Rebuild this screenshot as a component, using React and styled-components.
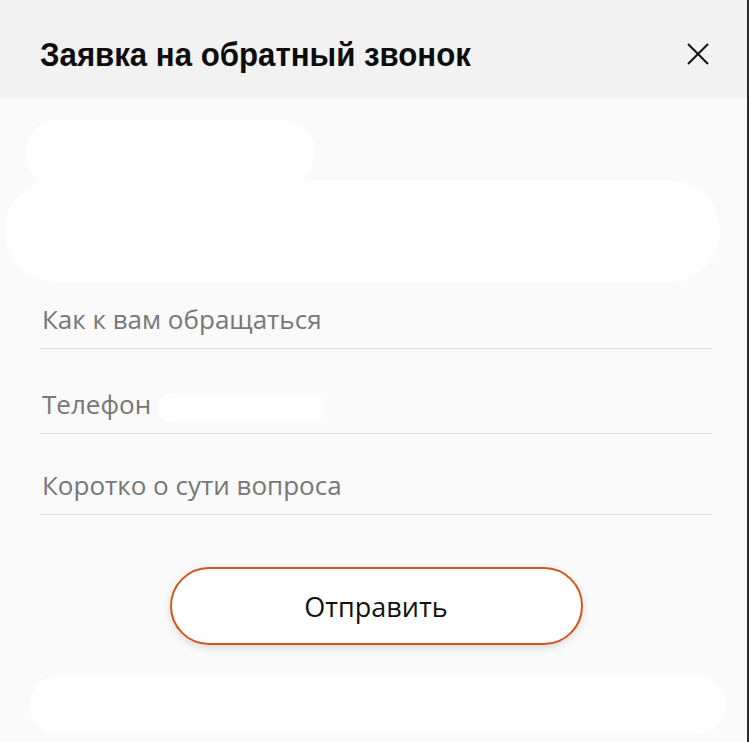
import React from 'react';
import styled, { createGlobalStyle } from 'styled-components';

const GlobalStyle = createGlobalStyle`
  html, body {
    margin: 0;
    padding: 0;
    background: #2b2b2b;
  }
  * { box-sizing: border-box; }
`;

const Modal = styled.div`
  width: 747px;
  height: 742px;
  background: #fafafa;
  font-family: 'Open Sans', 'Noto Sans', sans-serif;
  overflow: hidden;
`;

const Header = styled.div`
  height: 98px;
  background: #f2f2f2;
  display: flex;
  align-items: center;
  justify-content: space-between;
  padding: 12px 36px 0 40px;
`;

/* no narrow face installed: squeeze Liberation Sans bold a little */
const Title = styled.h2`
  margin: 0;
  font-family: 'Liberation Sans', Arial, sans-serif;
  font-weight: 700;
  font-size: 33px;
  color: #0d0d0d;
  white-space: nowrap;
  transform: scaleX(0.945);
  transform-origin: left center;
`;

const Close = styled.button`
  width: 26px;
  height: 26px;
  padding: 0;
  margin-top: -2px;
  border: none;
  background: none;
  cursor: pointer;
  display: flex;
  align-items: center;
  justify-content: center;
`;

const Redacted = styled.div`
  display: flex;
  flex-direction: column;
  padding: 22px 27px 0 5px;
  height: 192px;
`;

const Smudge = styled.div`
  background: #fff;
  height: ${({ h }) => h}px;
  width: ${({ w }) => w};
  margin-left: ${({ left }) => left || 0}px;
  margin-top: ${({ top }) => top || 0}px;
  border-radius: ${({ h }) => h / 2}px;
`;

const Form = styled.form`
  display: flex;
  flex-direction: column;
  padding: 0 35px 0 40px;
`;

const FieldWrap = styled.div`
  position: relative;
  margin-top: ${({ top }) => top}px;
`;

const Field = styled.input`
  display: block;
  width: 100%;
  height: 59px;
  border: none;
  border-bottom: 1px solid #dcdcdc;
  background: transparent;
  padding: 0 2px;
  font-family: 'Open Sans', 'Noto Sans', sans-serif;
  font-size: 26px;
  color: #333;
  outline: none;
  &::placeholder {
    color: #777;
  }
`;

const PhoneMask = styled.span`
  position: absolute;
  left: 118px;
  top: 18px;
  width: 166px;
  height: 30px;
  border-radius: 15px;
  background: #fff;
`;

const Submit = styled.button`
  align-self: center;
  margin: 52px 0 0 0;
  width: 413px;
  height: 78px;
  border: 2px solid #d4561e;
  border-radius: 39px;
  background: #fff;
  box-shadow: 0 3px 8px rgba(0, 0, 0, 0.12);
  font-family: 'Open Sans', 'Noto Sans', sans-serif;
  font-size: 27px;
  color: #111;
  cursor: pointer;
`;

const Footer = styled.div`
  padding: 30px 22px 0 30px;
`;

export default function App() {
  return (
    <>
      <GlobalStyle />
      <Modal>
        <Header>
          <Title>Заявка на обратный звонок</Title>
          <Close aria-label="Закрыть">
            <svg width="24" height="24" viewBox="0 0 24 24">
              <path d="M2 2 L22 22 M22 2 L2 22" stroke="#111" strokeWidth="2" fill="none" />
            </svg>
          </Close>
        </Header>
        <Redacted>
          <Smudge h={66} w="290px" left={20} />
          <Smudge h={102} w="100%" top={-6} />
        </Redacted>
        <Form onSubmit={(e) => e.preventDefault()}>
          <FieldWrap top={0}>
            <Field placeholder="Как к вам обращаться" />
          </FieldWrap>
          <FieldWrap top={26}>
            <Field placeholder="Телефон" />
            <PhoneMask />
          </FieldWrap>
          <FieldWrap top={22}>
            <Field placeholder="Коротко о сути вопроса" />
          </FieldWrap>
          <Submit type="submit">Отправить</Submit>
        </Form>
        <Footer>
          <Smudge h={60} w="100%" />
        </Footer>
      </Modal>
    </>
  );
}
